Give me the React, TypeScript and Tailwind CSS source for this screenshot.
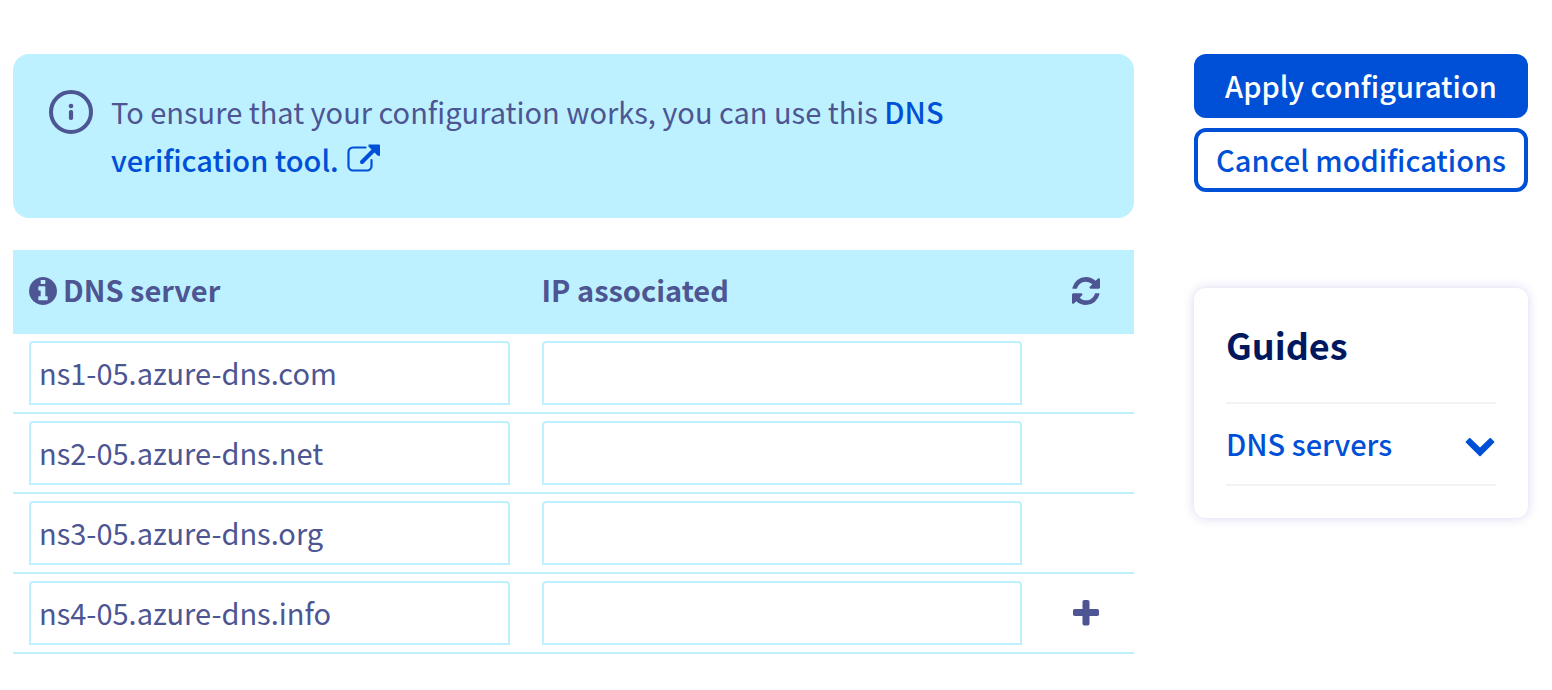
import React, { useState } from "react";

const SERVERS = [
  "ns1-05.azure-dns.com",
  "ns2-05.azure-dns.net",
  "ns3-05.azure-dns.org",
  "ns4-05.azure-dns.info",
];

function InfoOutlineIcon() {
  return (
    <svg viewBox="0 0 44 44" className="mt-[3px] size-11 shrink-0" aria-hidden="true">
      <circle cx="22" cy="22" r="20" fill="none" stroke="currentColor" strokeWidth="4" />
      <circle cx="22" cy="16" r="2.3" fill="currentColor" />
      <rect x="19.9" y="20" width="4.2" height="10" rx="1.8" fill="currentColor" />
    </svg>
  );
}

function ExternalLinkIcon() {
  return (
    <svg viewBox="0 0 34 28" className="ml-0.5 inline h-7 w-[34px] align-baseline" aria-hidden="true">
      <path
        d="M18.5 3.5H6A4.5 4.5 0 0 0 1.5 8V22A4.5 4.5 0 0 0 6 26.5H20A4.5 4.5 0 0 0 24.5 22V16"
        fill="none"
        stroke="currentColor"
        strokeWidth="2.2"
        strokeLinecap="round"
      />
      <path d="M15 18L27 6" fill="none" stroke="currentColor" strokeWidth="4" strokeLinecap="round" />
      <path d="M21.500 0.500H32a1 1 0 0 1 1 1V12L30.500 11.500L21.500 2.500Z" fill="currentColor" />
    </svg>
  );
}

function InfoSolidIcon() {
  return (
    <svg viewBox="0 128 1536 1536" className="mt-1 size-7 shrink-0" fill="currentColor" aria-hidden="true">
      <path d="M1024 1376v-160q0-14-9-23t-23-9h-96v-512q0-14-9-23t-23-9h-320q-14 0-23 9t-9 23v160q0 14 9 23t23 9h96v320h-96q-14 0-23 9t-9 23v160q0 14 9 23t23 9h448q14 0 23-9t9-23zm-128-896v-160q0-14-9-23t-23-9h-192q-14 0-23 9t-9 23v160q0 14 9 23t23 9h192q14 0 23-9t9-23zm640 416q0 209-103 385.5t-279.5 279.5-385.5 103-385.5-103-279.5-279.5-103-385.5 103-385.5 279.5-279.5 385.5-103 385.5 103 279.5 279.5 103 385.5z" />
    </svg>
  );
}

function RefreshIcon() {
  return (
    <svg viewBox="0 0 1536 1536" className="size-7" fill="currentColor" aria-hidden="true">
      <path d="M1511 928q0 5-1 7-64 268-268 434.5t-478 166.5q-146 0-282.5-55t-243.5-157l-129 129q-19 19-45 19t-45-19-19-45v-448q0-26 19-45t45-19h448q26 0 45 19t19 45-19 45l-137 137q71 66 161 102t187 36q134 0 250-65t186-179q11-17 53-117 8-23 30-23h192q13 0 22.5 9.5t9.500 22.500zm25-800v448q0 26-19 45t-45 19h-448q-26 0-45-19t-19-45 19-45l138-138q-148-137-349-137-134 0-250 65t-186 179q-11 17-53 117-8 23-30 23h-199q-13 0-22.500-9.500t-9.500-22.500v-7q65-268 270-434.500t480-166.500q146 0 284 55.500t245 156.500l130-129q19-19 45-19t45 19 19 45z" />
    </svg>
  );
}

function PlusIcon() {
  return (
    <svg viewBox="0 0 26 26" className="size-[26px]" fill="currentColor" aria-hidden="true">
      <rect x="0" y="9" width="26" height="7" rx="1.800" />
      <rect x="9.500" y="0" width="7" height="25.500" rx="1.800" />
    </svg>
  );
}

function ChevronIcon() {
  return (
    <svg viewBox="0 0 30 20" className="mt-1.5 mr-px h-5 w-[30px]" fill="currentColor" aria-hidden="true">
      <path d="M4 1.200Q4.700 0.500 5.400 1.200L15 10.500L24.600 1.200Q25.300 0.500 26 1.200L29.200 4.400Q29.800 5 29.200 5.600L15.700 18.900Q15 19.500 14.300 18.900L0.800 5.600Q0.200 5 0.800 4.400Z" />
    </svg>
  );
}

export default function App() {
  const [hosts, setHosts] = useState(SERVERS);
  const [ips, setIps] = useState(SERVERS.map(() => ""));

  const cellClass = "border-b-2 border-[#bef1ff] px-4";
  const inputClass =
    "block h-16 w-full rounded-t border-2 border-[#bef1ff] bg-white px-2 pb-0.5 text-[29px] text-[#4d5592] outline-none";

  return (
    <div className="flex items-start gap-[60px] bg-white pt-[54px] pr-6 pb-9 pl-[13px] font-['Noto_Sans_CJK_SC',sans-serif] text-[29px] text-[#4d5592]">
      <main className="flex min-w-0 flex-1 flex-col gap-8">
        <section className="flex gap-[18px] rounded-2xl bg-[#bef1ff] px-9 pt-[33px] pb-[35px]">
          <InfoOutlineIcon />
          <p className="max-w-[870px] leading-[48px]">
            To ensure that your configuration works, you can use this{" "}
            <a href="#verification" className="font-medium text-[#0050d7]">
              DNS verification tool. <ExternalLinkIcon />
            </a>
          </p>
        </section>

        <table className="w-full table-fixed border-separate border-spacing-0">
          <colgroup>
            <col />
            <col />
            <col className="w-24" />
          </colgroup>
          <thead>
            <tr className="h-[84px] bg-[#bef1ff] text-left">
              <th className="px-4 pb-1.5 font-bold">
                <span className="flex items-center gap-1.5 leading-10">
                  <InfoSolidIcon />
                  DNS server
                </span>
              </th>
              <th className="px-4 pb-1.5 leading-10 font-bold">IP associated</th>
              <th className="px-4 pb-0.5">
                <button type="button" aria-label="Refresh" className="mx-auto block">
                  <RefreshIcon />
                </button>
              </th>
            </tr>
          </thead>
          <tbody>
            {hosts.map((host, i) => (
              <tr key={i} className="h-20">
                <td className={cellClass}>
                  <input
                    type="text"
                    aria-label={`DNS server ${i + 1}`}
                    value={host}
                    onChange={(e) => setHosts(hosts.map((h, j) => (j === i ? e.target.value : h)))}
                    className={inputClass}
                  />
                </td>
                <td className={cellClass}>
                  <input
                    type="text"
                    aria-label={`IP associated ${i + 1}`}
                    value={ips[i] ?? ""}
                    onChange={(e) => setIps(ips.map((p, j) => (j === i ? e.target.value : p)))}
                    className={inputClass}
                  />
                </td>
                <td className={cellClass}>
                  {i === hosts.length - 1 && (
                    <button
                      type="button"
                      aria-label="Add a DNS server"
                      className="mx-auto block"
                      onClick={() => {
                        setHosts([...hosts, ""]);
                        setIps([...ips, ""]);
                      }}
                    >
                      <PlusIcon />
                    </button>
                  )}
                </td>
              </tr>
            ))}
          </tbody>
        </table>
      </main>

      <aside className="flex w-[334px] shrink-0 flex-col">
        <div className="flex flex-col gap-2.5 font-medium">
          <button type="button" className="h-16 rounded-xl bg-[#0050d7] whitespace-nowrap text-white">
            Apply configuration
          </button>
          <button
            type="button"
            className="h-16 rounded-xl border-4 border-[#0050d7] bg-white whitespace-nowrap text-[#0050d7]"
          >
            Cancel modifications
          </button>
        </div>

        <section className="mt-24 rounded-xl p-8 shadow-[0_0_12px_rgba(0,0,180,0.16)]">
          <h2 className="pt-px pb-[35px] text-4xl leading-[46px] font-bold text-[#00185e]">Guides</h2>
          <button
            type="button"
            className="flex h-[84px] w-full items-center justify-between border-y-2 border-[#f2f2f2] font-medium text-[#0050d7]"
          >
            DNS servers
            <ChevronIcon />
          </button>
        </section>
      </aside>
    </div>
  );
}
